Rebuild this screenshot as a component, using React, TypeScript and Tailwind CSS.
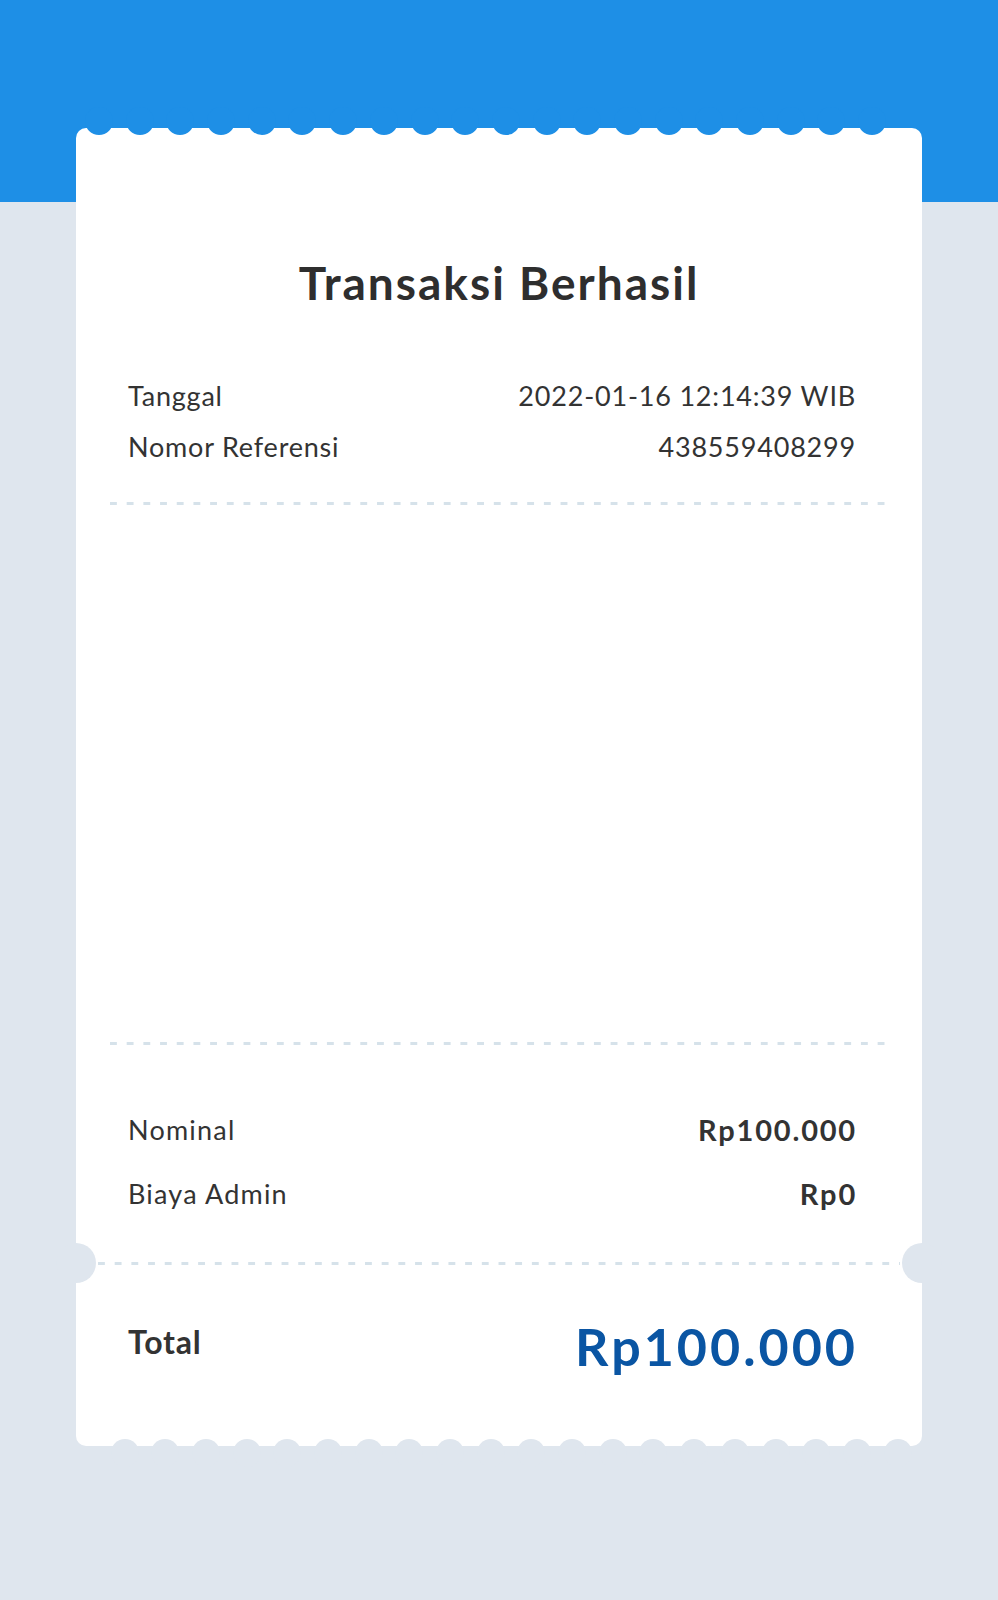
import React from "react";

const topScallops = Array.from({ length: 20 });
const bottomScallops = Array.from({ length: 20 });

const dashClass =
  "h-[3px] bg-[linear-gradient(to_right,#d6e2ea_7px,transparent_7px)] bg-[length:16.7px_3px]";

const InfoRow = ({ label, value }: { label: string; value: string }) => (
  <div className="flex justify-between items-center leading-[51px] text-[27px] tracking-[0.8px] text-[#333333]">
    <span>{label}</span>
    <span className="-mr-[1px]">{value}</span>
  </div>
);

const AmountRow = ({ label, value }: { label: string; value: string }) => (
  <div className="flex justify-between items-center leading-[64px] text-[#333333]">
    <span className="text-[27px] tracking-[1.2px]">{label}</span>
    <span className="font-bold text-[29px] tracking-[1.8px] -mr-[2px]">{value}</span>
  </div>
);

export default function App() {
  return (
    <div className="w-full min-h-[1600px] bg-[#dfe6ee] font-['Lato',sans-serif]">
      <div className="h-[202px] bg-[#1e8fe6]" />

      <div className="relative -mt-[74px] mx-[76px] h-[1318px] bg-white rounded-[10px] flex flex-col">
        {/* scalloped top edge */}
        <div className="absolute left-[9px] top-[-21px] flex gap-[12.7px]">
          {topScallops.map((_, i) => (
            <div key={i} className="w-[28px] h-[28px] rounded-full bg-[#1e8fe6]" />
          ))}
        </div>

        {/* scalloped bottom edge */}
        <div className="absolute left-[34.5px] bottom-[-21px] flex gap-[12.7px]">
          {bottomScallops.map((_, i) => (
            <div key={i} className="w-[28px] h-[28px] rounded-full bg-[#dfe6ee]" />
          ))}
        </div>

        {/* side notches */}
        <div className="absolute left-[-20px] top-[1115px] w-[40px] h-[40px] rounded-full bg-[#dfe6ee]" />
        <div className="absolute right-[-20px] top-[1115px] w-[40px] h-[40px] rounded-full bg-[#dfe6ee]" />

        <h1 className="mt-[127px] text-center text-[46px] leading-[56px] font-bold tracking-[2px] text-[#2e2e2e]">
          Transaksi Berhasil
        </h1>

        <div className="mt-[59px] pl-[52px] pr-[67px]">
          <InfoRow label="Tanggal" value="2022-01-16 12:14:39 WIB" />
          <InfoRow label="Nomor Referensi" value="438559408299" />
        </div>

        <div className={`mt-[30px] mx-[34px] ${dashClass}`} />

        <div className="h-[537px]" />
        <div className={`mx-[34px] ${dashClass}`} />

        <div className="mt-[53px] pl-[52px] pr-[67px]">
          <AmountRow label="Nominal" value="Rp100.000" />
          <AmountRow label="Biaya Admin" value="Rp0" />
        </div>

        <div className={`mt-[36px] mx-[22px] ${dashClass}`} />

        <div className="mt-[50px] pl-[52px] pr-[67px] flex justify-between items-start">
          <span className="mt-[8px] text-[32px] leading-[38px] font-bold tracking-[0.8px] text-[#333333]">
            Total
          </span>
          <span className="text-[52px] leading-[62px] font-bold tracking-[3px] -mr-[3px] text-[#0a55a3]">
            Rp100.000
          </span>
        </div>
      </div>
    </div>
  );
}
